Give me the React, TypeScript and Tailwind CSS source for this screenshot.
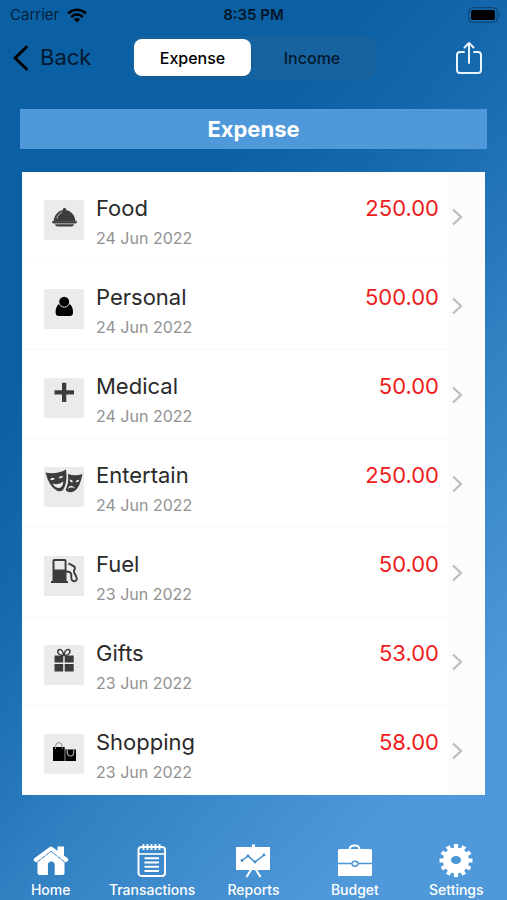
import React, { useState } from "react";

type Kind = "food" | "personal" | "medical" | "masks" | "fuel" | "gift" | "bags";

const rows: { name: string; date: string; amount: string; kind: Kind }[] = [
  { name: "Food", date: "24 Jun 2022", amount: "250.00", kind: "food" },
  { name: "Personal", date: "24 Jun 2022", amount: "500.00", kind: "personal" },
  { name: "Medical", date: "24 Jun 2022", amount: "50.00", kind: "medical" },
  { name: "Entertain", date: "24 Jun 2022", amount: "250.00", kind: "masks" },
  { name: "Fuel", date: "23 Jun 2022", amount: "50.00", kind: "fuel" },
  { name: "Gifts", date: "23 Jun 2022", amount: "53.00", kind: "gift" },
  { name: "Shopping", date: "23 Jun 2022", amount: "58.00", kind: "bags" },
];

function CategoryIcon({ kind }: { kind: Kind }) {
  return (
    <svg viewBox="0 0 40 40" className="size-10 shrink-0 rounded-xs bg-[#ebebeb] text-[#3c3c3c]" fill="currentColor" aria-hidden="true">
      {kind === "food" && (
        <>
          <circle cx="20.5" cy="9.3" r="1.6" />
          <path d="M9.500 21.500C10 14.500 15 10 20.500 10S31 14.500 31.500 21.500Z" />
          <path d="M12.800 18.500C13.500 15.500 15.500 13.300 18 12.500" fill="none" stroke="#ccc" strokeWidth=".9" />
          <path d="M8 21.300H33V22.200Q32.500 23.600 31 23.600H10Q8.500 23.600 8 22.200ZM11 24.300H30Q29.500 26.500 27.500 26.500H13.500Q11.500 26.500 11 24.300Z" />
        </>
      )}
      {kind === "personal" && (
        <g fill="#000">
          <path d="M15.500 14.500H25Q29 17 29 23.500Q29 27 25.500 27H15Q11.600 27 11.600 23.500Q11.600 17 15.500 14.500Z" />
          <circle cx="20.200" cy="12.800" r="5.400" stroke="#ebebeb" strokeWidth=".9" />
        </g>
      )}
      {kind === "medical" && <path d="M18 4.700H22.300V12.300H30V16.500H22.300V24H18V16.500H10.500V12.300H18Z" />}
      {kind === "masks" && (
        <>
          <path d="M1.500 5.500Q12 8 22 2.500Q24 15 19 23Q17 25 13.500 24Q5 20 1.500 5.500Z" />
          <path d="M24 7Q31 9.500 38.500 7Q36 20.500 30.500 24Q25 27 21.500 23Q25 16 24 7Z" />
          <g fill="#ebebeb">
            <path d="M6 12.500Q8 9.500 11 12Q8 14 6 12.500ZM14.500 11Q16.500 8 19.300 9.500Q18 12 14.500 11ZM8.500 16.500Q14.500 18.500 19.300 14.500Q19 21 15 21Q11 21 8.500 16.500Z" />
            <path d="M25.500 12.500Q28.500 12 29 15Q26 16 25.500 12.500ZM31.500 15Q33 12 35.300 13Q34 16 31.500 15ZM23.500 22Q26.500 16 31.500 21.500Q27.500 19.500 23.500 22Z" />
          </g>
        </>
      )}
      {kind === "fuel" && (
        <>
          <path fillRule="evenodd" d="M8.500 4.500Q8.500 3 10 3H20.800Q22.500 3 22.500 4.500V25H24V27H7V25H8.500ZM10.500 5V13.500H20.600V5Z" />
          <path d="M24.500 7.300L30 10.300Q31.800 12 30 14.500Q29.500 16 31.500 19Q34.500 24.500 30.500 25.200Q27.500 25.500 27.300 21.500V18.500Q27 15.500 22 15.500" fill="none" stroke="currentColor" strokeWidth="1.900" />
        </>
      )}
      {kind === "gift" && (
        <>
          <path d="M10.500 10.500H19.200V17.500H10.500ZM20.700 10.500H29.700V17.500H20.700ZM10.500 19H19.200V26.500H10.500ZM20.700 19H29.700V26.500H20.700Z" />
          <path d="M19.900 10.500Q14 10 13.700 7Q13.700 4.500 16 4.500Q18.500 4.500 19.900 10.500Q21 4.500 23.700 4.500Q26 4.500 26 7Q25.500 10 19.900 10.500Z" fill="none" stroke="currentColor" strokeWidth="1.500" />
        </>
      )}
      {kind === "bags" && (
        <g fill="#000">
          <path d="M9 13H20.700V27H9ZM21.300 15.500H32V27H21.300Z" />
          <path d="M11.500 15V12.500Q11.700 8.500 15 8.500T18.300 12.500V15" fill="none" stroke="#888" strokeWidth="1" />
          <path d="M23.300 16V18.500Q23.500 22 26.500 22T29.700 18.500V16" fill="none" stroke="#aaa" strokeWidth="1.200" />
        </g>
      )}
    </svg>
  );
}

const tabs: { label: string; icon: React.ReactNode }[] = [
  {
    label: "Home",
    icon: (
      <>
        <path d="M4.500 19.500L18 9.500L31.500 19.500V31Q31.500 33 29.500 33H21.700V23Q21.500 19.500 18.300 19.500T14.900 23V33H6.500Q4.500 33 4.500 31Z" />
        <path d="M24.500 4.500H31V14L24.500 9.500Z" />
        <path d="M3 17.800L18 6.700L33 17.800" fill="none" stroke="#fff" strokeWidth="4.400" strokeLinecap="round" strokeLinejoin="round" />
        <path d="M5 19.500L18 9.300L31 19.500" fill="none" stroke="#3b88c9" strokeWidth="1" strokeDasharray="4 1" />
      </>
    ),
  },
  {
    label: "Transactions",
    icon: (
      <g fill="none" stroke="#fff">
        <rect x="4.500" y="5" width="26.500" height="29" rx="3" strokeWidth="1.900" />
        <path d="M5 12H31" strokeWidth="1.600" />
        <path d="M9.500 2V8M13.500 2V8M17.500 2V8M21.500 2V8M25.500 2V8" strokeWidth="1.900" />
        <path d="M10.500 16.300H25M10.500 20.500H25M10.500 24.700H25M10.500 29H25" strokeWidth="2" />
      </g>
    ),
  },
  {
    label: "Reports",
    icon: (
      <>
        <path d="M17 2.500H20V5H35V28H1V5H17Z" />
        <path d="M16.500 27L11.500 35M20.500 27L25.500 35" fill="none" stroke="#fff" strokeWidth="2.200" />
        <g fill="#418dcd">
          <path d="M7 18.500L13 14L20 20L29 13" fill="none" stroke="#418dcd" strokeWidth="1.500" />
          <circle cx="7" cy="18.500" r="1.400" />
          <circle cx="13" cy="14" r="1.400" />
          <circle cx="20" cy="20" r="1.400" />
          <circle cx="29" cy="13" r="1.400" />
        </g>
      </>
    ),
  },
  {
    label: "Budget",
    icon: (
      <>
        <path d="M12.500 7Q13 3.500 17.500 3.500T22.500 7" fill="none" stroke="#fff" strokeWidth="2" />
        <rect x="1" y="7" width="34" height="27" rx="1.500" />
        <path d="M1 21.500H35" stroke="#4c95d5" strokeWidth="1.300" />
        <ellipse cx="18" cy="21.700" rx="3" ry="2.500" fill="#fff" stroke="#4c95d5" strokeWidth="1.400" />
      </>
    ),
  },
  {
    label: "Settings",
    icon: (
      <>
        <circle cx="18" cy="18.500" r="13" />
        <path d="M18 2V35M9.750 4.200L26.250 32.800M3.700 10.250L32.300 26.750M1.500 18.500H34.500M3.700 26.750L32.300 10.250M9.750 32.800L26.250 4.200" stroke="#fff" strokeWidth="4.200" />
        <ellipse cx="18" cy="18" rx="5" ry="4" fill="#4c95d5" />
      </>
    ),
  },
];

export default function App() {
  const [mode, setMode] = useState("Expense");
  return (
    <div className="flex min-h-screen flex-col bg-linear-[131deg,#0a60a3_27%,#1467ab_39%,#2475b9_53%,#3080c2_61%,#4f99da_86%] font-['Inter','Liberation_Sans',sans-serif] text-black">
      <div className="grid h-[30px] grid-cols-3 items-center px-2.5 text-[15px]">
        <div className="flex items-center gap-2 text-[#04213c]">
          Carrier
          <svg viewBox="0 0 20 15" className="h-[15px] w-5" fill="none" stroke="#000" strokeWidth="2.600" aria-hidden="true">
            <path d="M1 5.500Q10-2 19 5.500M4.200 8.900Q10 4 15.800 8.900" />
            <path d="M10 14.500L6.800 11.200Q10 8.700 13.200 11.200Z" fill="#000" stroke="none" />
          </svg>
        </div>
        <div className="text-center font-semibold text-[#021526]">8:35 PM</div>
        <svg viewBox="0 0 33 16" className="-mr-1 h-4 w-[33px] justify-self-end" aria-hidden="true">
          <rect x=".7" y=".7" width="28.600" height="14.600" rx="4" fill="none" stroke="#0b406d" />
          <rect x="3" y="3" width="24" height="10" rx="2" />
          <path d="M31 5.500Q33 8 31 10.500Z" fill="#0b406d" />
        </svg>
      </div>

      <header className="grid grid-cols-[1fr_auto_1fr] items-center px-3 py-1.5">
        <button className="flex items-center gap-3 justify-self-start text-[22px] text-[#03192d]">
          <svg viewBox="0 0 16 26" className="h-[26px] w-4" fill="none" stroke="#000" strokeWidth="3" strokeLinecap="round" strokeLinejoin="round" aria-hidden="true">
            <path d="M14.500 2L3 13L14.500 24" />
          </svg>
          Back
        </button>
        <div className="flex h-[43px] w-[243px] rounded-lg bg-[#17639f] px-0.5 py-[3px] text-base font-medium">
          {["Expense", "Income"].map((m) => (
            <button key={m} onClick={() => setMode(m)} className={mode === m ? "w-[117px] rounded-lg bg-white shadow-sm" : "flex-1 rounded-lg text-[#03192d]"}>
              {m}
            </button>
          ))}
        </div>
        <button aria-label="Share" className="mr-3 justify-self-end">
          <svg viewBox="0 0 28 34" className="h-[34px] w-7" fill="none" stroke="#e8f4ff" strokeWidth="2" strokeLinecap="round" strokeLinejoin="round" aria-hidden="true">
            <path d="M9 11H5Q2 11 2 14V29Q2 32 5 32H23Q26 32 26 29V14Q26 11 23 11H19M14 22V2M9.500 6.500L14 2L18.500 6.500" />
          </svg>
        </button>
      </header>

      <h1 className="mx-5 mt-6 bg-[#4f99da] text-center text-[22px] leading-10 font-bold text-white">{mode}</h1>

      <ul className="mx-[22px] mt-[23px] bg-white">
        {rows.map((r) => (
          <li key={r.name} className="flex h-[89px]">
            <div className="flex flex-1 border-b border-[#f9f9f9] pt-5 pl-[22px]">
              <div className="pt-2">
                <CategoryIcon kind={r.kind} />
              </div>
              <div className="flex-1 pl-3">
                <div className="text-[22px] leading-8 text-[#2a2a2a]">{r.name}</div>
                <div className="mt-0.5 text-base leading-6 text-[#929292]">{r.date}</div>
              </div>
              <div className="pr-2.5 text-[22px] leading-8 text-[#ee1c1c]">{r.amount}</div>
            </div>
            <div className="w-9 shrink-0 bg-[#fcfcfc] pt-9">
              <svg viewBox="0 0 12 18" className="ml-0.5 h-[18px] w-3" fill="none" stroke="#bcbcbc" strokeWidth="2.200" aria-hidden="true">
                <path d="M2 1.500L10 9L2 16.500" />
              </svg>
            </div>
          </li>
        ))}
      </ul>

      <nav className="mt-auto grid grid-cols-5">
        {tabs.map((t) => (
          <a key={t.label} href={"#" + t.label} className="flex flex-col items-center text-sm leading-5 font-medium text-white">
            <svg viewBox="0 0 36 38" className="h-[38px] w-9" fill="#fff" aria-hidden="true">
              {t.icon}
            </svg>
            {t.label}
          </a>
        ))}
      </nav>
    </div>
  );
}
